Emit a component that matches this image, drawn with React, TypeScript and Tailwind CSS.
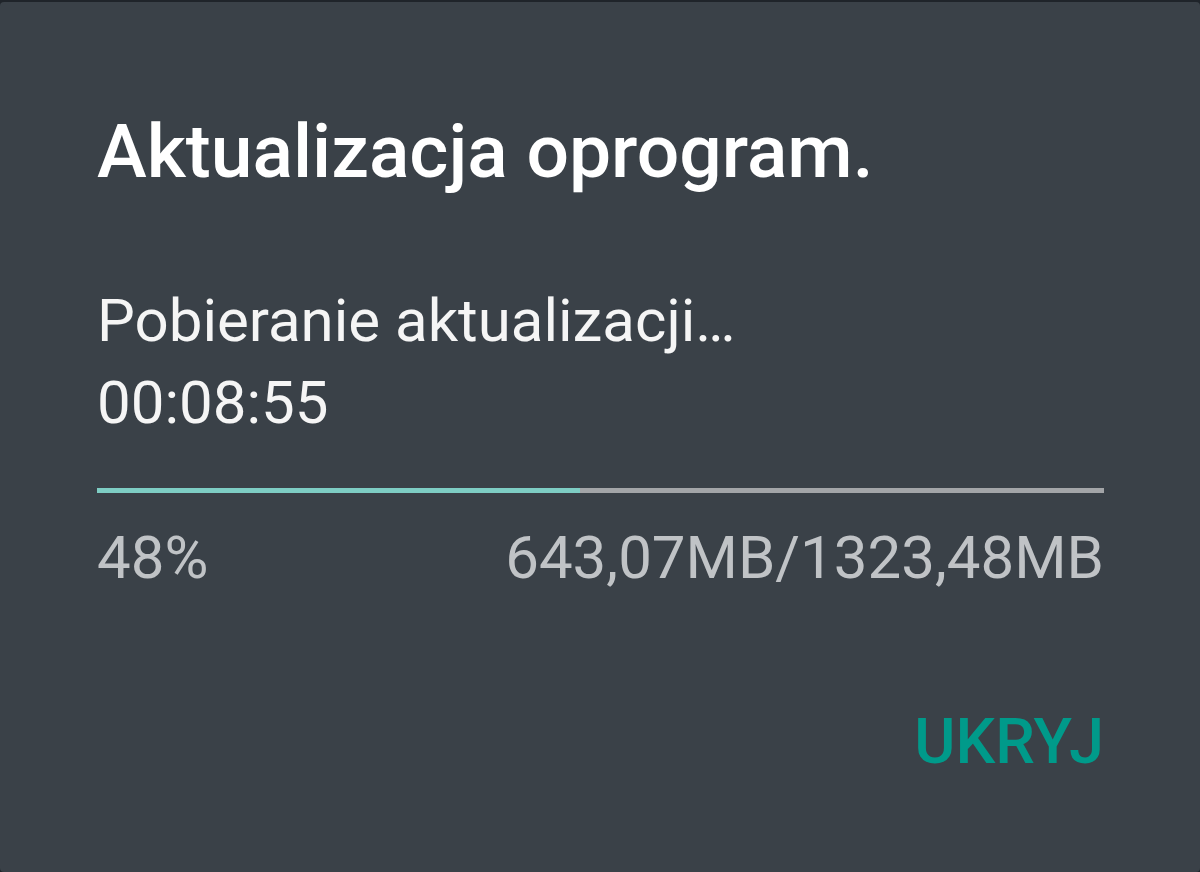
export default function App() {
  return (
    <div className="w-[1200px] h-[872px] bg-[#1f242a] pt-[2px] overflow-hidden" style={{ fontFamily: 'Roboto, "Noto Sans", sans-serif' }}>
      <div className="h-[870px] rounded-[4px] bg-[#3a4148] pl-[97px] pr-[96px] flex flex-col">
        <div className="mt-[112px] text-[75px] leading-none font-medium text-white whitespace-nowrap">Aktualizacja oprogram.</div>
        <div className="mt-[102px] text-[60px] leading-none text-[#f5f5f5] whitespace-nowrap">Pobieranie aktualizacji…</div>
        <div className="mt-[22px] text-[60px] leading-none text-[#f5f5f5]">00:08:55</div>
        <div className="mt-[55px] h-[5px] w-full bg-[#a3a5a8] flex">
          <div className="h-full bg-[#7ecdc4]" style={{ width: '48%' }} />
        </div>
        <div className="mt-[35px] flex justify-between text-[60px] leading-none text-[#c0c3c6] whitespace-nowrap">
          <span>48%</span>
          <span>643,07MB/1323,48MB</span>
        </div>
        <div className="mt-[122px] flex justify-end">
          <span className="text-[63px] leading-none font-medium text-[#009a8a]">UKRYJ</span>
        </div>
      </div>
    </div>
  );
}
